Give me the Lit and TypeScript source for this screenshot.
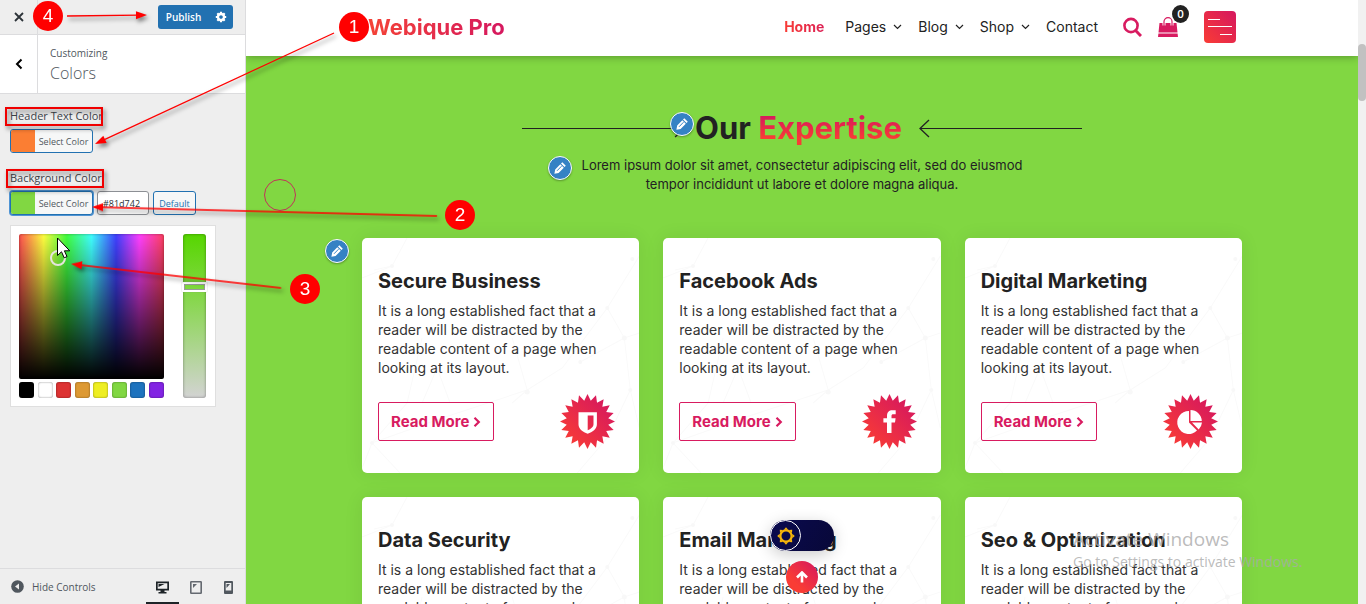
import { LitElement, html, svg, css } from "lit";
import { customElement } from "lit/decorators.js";

const CARD_TEXT =
  "It is a long established fact that a reader will be distracted by the readable content of a page when looking at its layout.";

const burstPoints = (spikes: number, outer: number, inner: number, c: number) =>
  Array.from({ length: spikes * 2 }, (_, i) => {
    const r = i % 2 ? inner : outer;
    const a = (Math.PI * i) / spikes - Math.PI / 2;
    return `${(c + r * Math.cos(a)).toFixed(2)},${(c + r * Math.sin(a)).toFixed(2)}`;
  }).join(" ");

const glyphs: Record<string, unknown> = {
  shield: svg`<path fill="#fff" fill-rule="evenodd" d="M18.5 18.3h18.4v12c0 4.800-4.500 8-9.200 9.500c-4.700-1.500-9.200-4.700-9.200-9.500zM27.700 21.500v14.700c3-1.200 5.800-3.200 5.800-6v-8.700z"/>`,
  facebook: svg`<path fill="#fff" d="M25 39v-10.500h-3.600v-4.300h3.600v-2.200c0-4 2-5.800 5.500-5.800h3.200v4.100h-2.300c-1.500 0-1.900.6-1.900 1.900v2h4.100l-.6 4.300h-3.500v10.500z"/>`,
  pie: svg`<path fill="#fff" d="M26 17v11.500l8 8a11.500 11.500 0 1 1-8-19.500z"/><path fill="#fff" d="M27.500 16a11.500 11.500 0 0 1 11.300 11h-11.300zM29 28.500h10a11.500 11.500 0 0 1-3.300 7z"/>`,
};

const pencil = html`<button class="edit" aria-label="Edit">
  <svg width="24" height="24" viewBox="0 0 24 24">
    <path fill="#fff" d="M14.300 6.200l3.500 3.500l-1.300 1.300l-3.500-3.500zM12.300 8.200l3.500 3.500l-5.200 5.200l-4.200.9l.8-4.300z" />
    <path stroke="#3582c4" stroke-width="1" d="M9 14.800l4.500-4.600" />
  </svg>
</button>`;

@customElement("service-card")
class ServiceCard extends LitElement {
  static properties = { heading: {}, icon: {} };
  declare heading: string;
  declare icon: string;
  static styles = css`
    :host { display: block; position: relative; background: #fff; border-radius: 5px; padding: 30px 24px 24px 16px; box-shadow: 0 0 20px rgba(0, 0, 0, 0.07); color: #222; }
    .net { position: absolute; inset: 0; width: 100%; height: 100%; }
    h3 { position: relative; margin: 0 0 7px; font-size: 20px; line-height: 26px; font-weight: 700; white-space: nowrap; }
    p { position: relative; margin: 0 0 17px; font-size: 14px; line-height: 19px; color: #333; max-width: 235px; }
    .row { position: relative; display: flex; align-items: center; justify-content: space-between; }
    a { display: flex; align-items: center; gap: 4px; box-sizing: border-box; height: 39px; padding: 0 12px; border: 1px solid #d81b60; border-radius: 2px; color: #d81b60; font-size: 15px; font-weight: 700; text-decoration: none; white-space: nowrap; }
    .burst { display: block; }
  `;
  render() {
    return html`
      <svg class="net" viewBox="0 0 277 235" preserveAspectRatio="none" fill="none" stroke="#fafafa">
        <path d="M45 0L30 28L0 40M30 28L12 32M277 18L245 70L200 130L165 152L80 180L10 205L0 230M245 70L262 100L277 95M262 100L268 152L277 190M268 152L245 200L215 235M262 100L218 124M165 152L150 100M165 152L150 165M75 130L60 165M75 130L88 165M10 205L38 235M10 205L45 165L60 100" />
        <g fill="#f8f8f8" stroke="none"><circle cx="30" cy="28" r="2" /><circle cx="245" cy="70" r="2" /><circle cx="262" cy="100" r="2.500" /><circle cx="218" cy="124" r="2" /><circle cx="268" cy="152" r="2" /><circle cx="165" cy="154" r="2.500" /><circle cx="270" cy="21" r="2" /><circle cx="10" cy="205" r="2" /></g>
      </svg>
      <h3>${this.heading}</h3>
      <p>${CARD_TEXT}</p>
      <div class="row">
        <a href="#">Read More
          <svg width="8" height="10" viewBox="0 0 8 10" fill="none" stroke="#d81b60" stroke-width="2.200"><path d="M1.500 .8l4.300 4.200l-4.300 4.200" /></svg>
        </a>
        <svg class="burst" width="55" height="55" viewBox="0 0 55 55">
          <defs><linearGradient id="g" x1="0" y1="1" x2="1" y2="0"><stop offset="0.100" stop-color="#f93c35" /><stop offset="0.900" stop-color="#d5175f" /></linearGradient></defs>
          <polygon fill="url(#g)" points=${burstPoints(20, 27.5, 21, 27.5)} />
          ${glyphs[this.icon]}
        </svg>
      </div>`;
  }
}

@customElement("customizer-panel")
class CustomizerPanel extends LitElement {
  static styles = css`
    :host { display: flex; flex-direction: column; flex: none; box-sizing: border-box; width: 246px; background: #eee; border-right: 1px solid #dcdcde; color: #50575e; font-family: "Open Sans", "Noto Sans", sans-serif; }
    button { font: inherit; color: inherit; margin: 0; padding: 0; border: 0; background: none; }
    svg { display: block; }
    .top { display: flex; align-items: stretch; height: 34px; border-bottom: 1px solid #dcdcde; }
    .close { width: 38px; border-right: 1px solid #dcdcde; display: flex; align-items: center; justify-content: center; }
    .save { margin: 5px 12px 5px auto; display: flex; background: #2271b1; border-radius: 3px; color: #fff; }
    .publish { width: 51px; font-size: 10px; font-weight: 600; }
    .gear { width: 24px; display: flex; align-items: center; justify-content: center; }
    .head { display: flex; height: 58px; background: #fff; border-bottom: 1px solid #dcdcde; }
    .back { width: 38px; border-right: 1px solid #dcdcde; display: flex; align-items: center; justify-content: center; }
    .crumb { padding: 10px 12px; font-size: 10px; line-height: 16px; }
    h1 { margin: 0; font-size: 16px; line-height: 24px; font-weight: 300; }
    .body { flex: 1; padding: 13px 10px 0; min-height: 0; }
    .label { display: block; font-size: 11px; line-height: 17px; font-weight: 400; margin-bottom: 5px; color: #3c434a; }
    .controls { display: flex; gap: 4px; height: 24px; margin-bottom: 16px; }
    .pick { display: flex; align-items: center; width: 83px; box-sizing: border-box; border: 1px solid #2271b1; border-radius: 3px; background: #f6f7f7; font-size: 9px; overflow: hidden; }
    .pick.focus { box-shadow: 0 0 0 1px #4f94d4; }
    .swatch { width: 24px; height: 100%; flex: none; }
    .orange { background: #fb7e33; }
    .green { background: #81d742; }
    .pick .cap { flex: 1; text-align: center; white-space: nowrap; }
    .hex { width: 52px; box-sizing: border-box; border: 1px solid #8c8f94; border-radius: 3px; background: #fff; font-family: inherit; font-size: 9px; color: #2c3338; padding: 0 5px; }
    .default { width: 43px; border: 1px solid #2271b1; border-radius: 3px; background: #f6f7f7; color: #2271b1; font-size: 9px; }
    .picker { display: flex; justify-content: space-between; width: 206px; box-sizing: border-box; height: 182px; padding: 8px; margin-top: 10px; background: #fff; border: 1px solid #dfdfdf; }
    .tight { margin-bottom: 0; }
    .left { width: 145px; display: flex; flex-direction: column; justify-content: space-between; }
    .square { position: relative; height: 145px; border-radius: 2px; background: linear-gradient(to bottom, rgba(0,0,0,0), #000), linear-gradient(to right, #ff5050, #ffff40 17%, #40ff40 33%, #40ffff 50%, #4040ff 67%, #ff40ff 83%, #ff4060); box-shadow: inset 0 0 3px rgba(0,0,0,.4); }
    .ring { position: absolute; left: 31px; top: 16px; width: 12px; height: 12px; border: 2px solid #e4e4dc; border-radius: 50%; }
    .palette { display: flex; justify-content: space-between; }
    .palette button { width: 15px; height: 16px; border-radius: 3px; box-shadow: inset 0 0 2px rgba(0,0,0,.5); }
    .k { background: #000; } .w { background: #fff; } .r { background: #d33; } .o { background: #d93; } .y { background: #ee2; } .g { background: #81d742; } .b { background: #1e73be; } .v { background: #8224e3; }
    .strip { appearance: none; -webkit-appearance: none; writing-mode: vertical-lr; direction: rtl; width: 23px; height: 164px; margin: 0 1px 0 0; border-radius: 3px; background: linear-gradient(to bottom, #56d600, #81d742 35%, #d3d3d3); box-shadow: inset 0 0 3px rgba(0,0,0,.4); }
    .strip::-webkit-slider-thumb { -webkit-appearance: none; width: 25px; height: 10px; margin-left: -1px; box-sizing: border-box; border: 2px solid #fff; border-radius: 1px; box-shadow: inset 0 0 0 1px #999, 0 0 1px #777; background: transparent; }
    .foot { display: flex; align-items: stretch; height: 35px; border-top: 1px solid #dcdcde; padding-left: 11px; font-size: 10px; }
    .hide { display: flex; align-items: center; gap: 8px; white-space: nowrap; }
    .devices { margin-left: auto; display: flex; }
    .devices button { width: 33px; padding-top: 3px; display: flex; align-items: center; justify-content: center; border-bottom: 2px solid transparent; }
    .devices button.on { border-color: #1d2327; }
  `;
  render() {
    return html`
      <div class="top">
        <button class="close" aria-label="Close"><svg width="10" height="10" viewBox="0 0 10 10" stroke="#2c3338" stroke-width="1.800"><path d="M1 1l8 8M9 1l-8 8" /></svg></button>
        <div class="save">
          <button class="publish">Publish</button>
          <button class="gear" aria-label="Publish settings"><svg width="12" height="12" viewBox="-6 -6 12 12"><circle r="3" fill="none" stroke="#fff" stroke-width="2.400" />${[0, 45, 90, 135].map((a) => svg`<path transform="rotate(${a})" d="M0-5.200v2M0 3.200v2" stroke="#fff" stroke-width="2.200" />`)}</svg></button>
        </div>
      </div>
      <div class="head">
        <button class="back" aria-label="Back"><svg width="8" height="12" viewBox="0 0 8 12" fill="none" stroke="#000" stroke-width="2"><path d="M6.500 1.500l-4.500 4.500l4.500 4.500" /></svg></button>
        <div class="crumb">Customizing<h1>Colors</h1></div>
      </div>
      <div class="body">
        <label class="label" for="head">Header Text Color</label>
        <div class="controls"><button id="head" class="pick"><span class="swatch orange"></span><span class="cap">Select Color</span></button></div>
        <label class="label" for="hex">Background Color</label>
        <div class="controls tight">
          <button class="pick focus"><span class="swatch green"></span><span class="cap">Select Color</span></button>
          <input id="hex" class="hex" type="text" value="#81d742" />
          <button class="default">Default</button>
        </div>
        <div class="picker">
          <div class="left">
            <div class="square"><span class="ring"></span></div>
            <div class="palette">${["k", "w", "r", "o", "y", "g", "b", "v"].map((c) => html`<button class=${c} aria-label="Palette color"></button>`)}</div>
          </div>
          <input class="strip" type="range" min="0" max="100" value="69" aria-label="Saturation" />
        </div>
      </div>
      <div class="foot">
        <button class="hide"><svg width="13" height="13" viewBox="0 0 13 13"><circle cx="6.500" cy="6.500" r="6.300" fill="#50575e" /><path d="M8 3.500v6l-4-3z" fill="#eee" /></svg>Hide Controls</button>
        <div class="devices">
          <button class="on" aria-label="Desktop"><svg width="13" height="13" viewBox="0 0 13 13"><path fill="#1d2327" fill-rule="evenodd" d="M0 .5h13v9h-4.500v1.500h2v1.500h-8v-1.500h2v-1.500h-4.500zM1.700 2.200v5.500h9.600v-5.500z" /><path fill="#1d2327" d="M2.500 3h6l-6 3z" /></svg></button>
          <button aria-label="Tablet"><svg width="12" height="13" viewBox="0 0 12 13"><rect x=".8" y=".8" width="10.400" height="11.400" rx=".5" fill="none" stroke="#646970" stroke-width="1.600" /><path fill="#646970" d="M3 3h4l-4 4z" /></svg></button>
          <button aria-label="Mobile"><svg width="9" height="13" viewBox="0 0 9 13"><path fill="#50575e" fill-rule="evenodd" d="M1 0h7v0a1 1 0 0 1 1 1v11a1 1 0 0 1-1 1h-7a1 1 0 0 1-1-1v-11a1 1 0 0 1 1-1zM1.700 2v7.500h5.600v-7.500z" /><path fill="#50575e" d="M2.500 3h3.500l-3.500 4z" /></svg></button>
        </div>
      </div>`;
  }
}

@customElement("site-preview")
class SitePreview extends LitElement {
  static styles = css`
    :host { display: block; position: relative; flex: 1; min-width: 0; overflow: hidden; background: #81d742; font-family: Inter, "Noto Sans", sans-serif; color: #222; }
    svg { display: block; }
    button { font: inherit; margin: 0; padding: 0; border: 0; background: none; }
    header { position: relative; background: #fff; height: 56px; box-shadow: 0 1px 8px rgba(0, 0, 0, 0.3); }
    .wrap { max-width: 880px; box-sizing: border-box; margin: 0 auto; position: relative; }
    .bar { display: flex; align-items: center; height: 54px; padding: 0 6px; }
    .logo { font-size: 22px; line-height: 30px; font-weight: 700; text-decoration: none; color: transparent; background: linear-gradient(90deg, #f44336, #d5175f); background-clip: text; -webkit-background-clip: text; white-space: nowrap; }
    nav { margin-left: auto; display: flex; align-items: center; gap: 16px; font-size: 14px; line-height: 20px; }
    nav a { display: flex; align-items: center; gap: 7px; color: #222; text-decoration: none; }
    nav a.home { font-weight: 700; margin-right: 5px; color: transparent; background: linear-gradient(90deg, #f93c35, #dc2256); background-clip: text; -webkit-background-clip: text; }
    .tools { display: flex; align-items: center; margin-left: 25px; }
    .bag { position: relative; margin: 0 26px 0 16px; }
    .count { position: absolute; left: 14px; top: -12px; width: 17px; height: 18px; border-radius: 50%; background: #222; color: #fff; font-size: 10px; line-height: 18px; font-weight: 600; text-align: center; }
    .menu { width: 32px; height: 32px; border-radius: 4px; background: linear-gradient(45deg, #f93c35, #d5175f); }
    .title { display: flex; align-items: center; max-width: 560px; margin: 0 auto; padding-top: 52px; }
    .title svg { flex: 1; min-width: 0; height: 20px; }
    h2 { margin: 0 17px 0 10px; font-size: 31px; line-height: 40px; font-weight: 700; white-space: nowrap; }
    .hot { color: transparent; background: linear-gradient(0deg, #f93c35 20%, #d5175f 85%); background-clip: text; -webkit-background-clip: text; }
    .intro { max-width: 480px; margin: 8px auto 44px; font-size: 13px; line-height: 19px; text-align: center; }
    .grid { display: grid; grid-template-columns: repeat(3, minmax(0, 1fr)); gap: 24px; }
    .edit { position: absolute; box-sizing: border-box; width: 24px; height: 24px; border: 1px solid #fff; border-radius: 50%; background: #3582c4; display: grid; place-items: center; box-shadow: 0 1px 2px rgba(0,0,0,.3); }
    .edit svg { flex: none; margin: -1px; }
    .e1 .edit { left: 308px; top: 56px; }
    .e2 .edit { left: 186px; top: 100px; }
    .e3 .edit { left: -37px; top: 183px; }
    .ringlet { position: absolute; left: 18px; top: 179px; width: 30px; height: 30px; border: 1px solid #c2335a; border-radius: 50%; }
    .mode { position: absolute; left: 50%; top: 520px; margin-left: -32px; width: 64px; height: 31px; border-radius: 16px; background: linear-gradient(120deg, #0a0a50, #080838); box-shadow: 0 4px 16px rgba(0,0,0,.2); }
    .knob { display: grid; place-items: center; box-sizing: border-box; width: 31px; height: 31px; border: 1px solid #fff; border-radius: 50%; }
    .up { position: absolute; left: 50%; top: 561px; margin-left: -16px; width: 32px; height: 32px; border-radius: 50%; background: linear-gradient(45deg, #f93c35 30%, #d5175f); display: grid; place-items: center; }
  `;
  render() {
    const chev = html`<svg width="9" height="6" viewBox="0 0 9 6" fill="none" stroke="#222" stroke-width="1.200"><path d="M1 1l3.500 3.500l3.500-3.500" /></svg>`;
    const cards = [["Secure Business", "shield"], ["Facebook Ads", "facebook"], ["Digital Marketing", "pie"], ["Data Security", "shield"], ["Email Marketing", "facebook"], ["Seo & Optimization", "pie"]];
    return html`
      <header>
        <div class="wrap bar">
          <a class="logo" href="#">Webique Pro</a>
          <nav>
            <a class="home" href="#">Home</a><a href="#">Pages ${chev}</a><a href="#">Blog ${chev}</a><a href="#">Shop ${chev}</a><a href="#">Contact</a>
          </nav>
          <div class="tools">
            <button aria-label="Search"><svg width="19" height="20" viewBox="0 0 19 20" fill="none" stroke="#d81b60"><circle cx="8" cy="8.500" r="6.600" stroke-width="2.600" /><path d="M12.600 13.500l5.400 5.500" stroke-width="3" /></svg></button>
            <button class="bag" aria-label="Cart"><svg width="20" height="20" viewBox="0 0 20 20"><path fill="#d81b60" d="M1.500 6h17l1 9.500h-19zM.4 16.500h19.200l.4 3.500h-20z" /><path d="M6 8.500v-4a4 3.800 0 0 1 8 0v4" fill="none" stroke="#fff" stroke-width="3" /><path d="M6 9v-4.500a4 3.800 0 0 1 8 0v4.500" fill="none" stroke="#d81b60" stroke-width="1.200" /></svg><span class="count">0</span></button>
            <button class="menu" aria-label="Menu"><svg width="32" height="32" stroke="#fff"><path d="M4 8.500h12M4 15.500h24M16 23.500h12" /></svg></button>
          </div>
        </div>
      </header>
      <div class="wrap">
        <div class="title">
          <svg viewBox="0 0 163 20" preserveAspectRatio="xMaxYMid slice" fill="none" stroke="#222"><path d="M0 10.500h162" /><path stroke-width="1.300" d="M153 2l9 8.500l-9 8.500" /></svg>
          <h2>Our <span class="hot">Expertise</span></h2>
          <svg fill="none" stroke="#222"><path d="M1 10.500h400" /><path stroke-width="1.300" d="M10 2l-9 8.500l9 8.500" /></svg>
        </div>
        <p class="intro">Lorem ipsum dolor sit amet, consectetur adipiscing elit, sed do eiusmod tempor incididunt ut labore et dolore magna aliqua.</p>
        <span class="e1">${pencil}</span><span class="e2">${pencil}</span><span class="e3">${pencil}</span>
        <div class="grid">${cards.map(([h, i]) => html`<service-card .heading=${h} .icon=${i}></service-card>`)}</div>
      </div>
      <span class="ringlet"></span>
      <button class="mode" aria-label="Toggle dark mode"><span class="knob"><svg width="18" height="18" viewBox="-9 -9 18 18"><circle r="5.600" fill="none" stroke="#f5b50a" stroke-width="2.200" />${[0, 45, 90, 135].map((a) => svg`<path transform="rotate(${a})" d="M-2.200-6.300L0-8.800L2.200-6.300zM-2.200 6.300L0 8.800L2.200 6.300z" fill="#f5b50a" />`)}</svg></span></button>
      <button class="up" aria-label="Back to top"><svg width="12" height="12" viewBox="0 0 12 12" fill="none" stroke="#fff" stroke-width="2.600"><path d="M6 11.500v-9M1 6.500l5-5l5 5" /></svg></button>`;
  }
}

@customElement("app-root")
class AppRoot extends LitElement {
  static styles = css`
    :host { display: flex; position: relative; height: 100vh; overflow: hidden; }
    .scroll { flex: none; width: 8px; background: #f1f1f1; padding-top: 44px; box-sizing: border-box; }
    .thumb { height: 57px; border-radius: 4px; background: #c1c1c1; }
    .notes { position: absolute; inset: 0; width: 100%; height: 100%; pointer-events: none; }
    .notes text { font: 19px "Liberation Sans", Arial, sans-serif; fill: #fff; text-anchor: middle; }
    .shade { filter: drop-shadow(2px 3px 2px rgba(0, 0, 0, 0.5)); }
    .activate { position: absolute; right: 58px; bottom: 32px; width: 235px; pointer-events: none; color: rgba(170, 170, 170, 0.8); font-family: "Open Sans", "Noto Sans", sans-serif; white-space: nowrap; }
    .big { font-size: 19px; line-height: 26px; }
    .small { font-size: 14px; line-height: 20px; }
  `;
  render() {
    const arrows = [[334, 33, 95, 144], [437, 216, 92, 207], [281, 288, 71, 264], [67, 16, 147, 15]];
    const badges = [[354, 27], [460, 215], [305, 289], [48, 16]];
    return html`
      <customizer-panel></customizer-panel>
      <site-preview></site-preview>
      <div class="scroll"><div class="thumb"></div></div>
      <div class="activate"><div class="big">Activate Windows</div><div class="small">Go to Settings to activate Windows.</div></div>
      <svg class="notes">
        <g class="shade" fill="none" stroke="#f00000" stroke-width="2"><rect x="6" y="108" width="96" height="17" /><rect x="7" y="170" width="96" height="17" /></g>
        <g class="shade">${arrows.map(([x1, y1, x2, y2]) => {
          const deg = (Math.atan2(y2 - y1, x2 - x1) * 180) / Math.PI;
          const len = Math.hypot(x2 - x1, y2 - y1);
          return svg`<g transform="translate(${x2} ${y2}) rotate(${deg})"><path d="M${-len} 0H-8" stroke="#f00" stroke-width="1.300" /><path d="M0 0l-11-4v8z" fill="#f00" /></g>`;
        })}</g>
        <path d="M57.500 238v17.500l4-3.700l2.700 6l2.800-1.200l-2.600-5.800h5.300z" fill="#fff" stroke="#000" />
        ${badges.map(([x, y], i) => svg`<circle cx=${x} cy=${y} r="15" fill="#f00" /><text x=${x} y=${y + 6}>${i + 1}</text>`)}
      </svg>`;
  }
}
